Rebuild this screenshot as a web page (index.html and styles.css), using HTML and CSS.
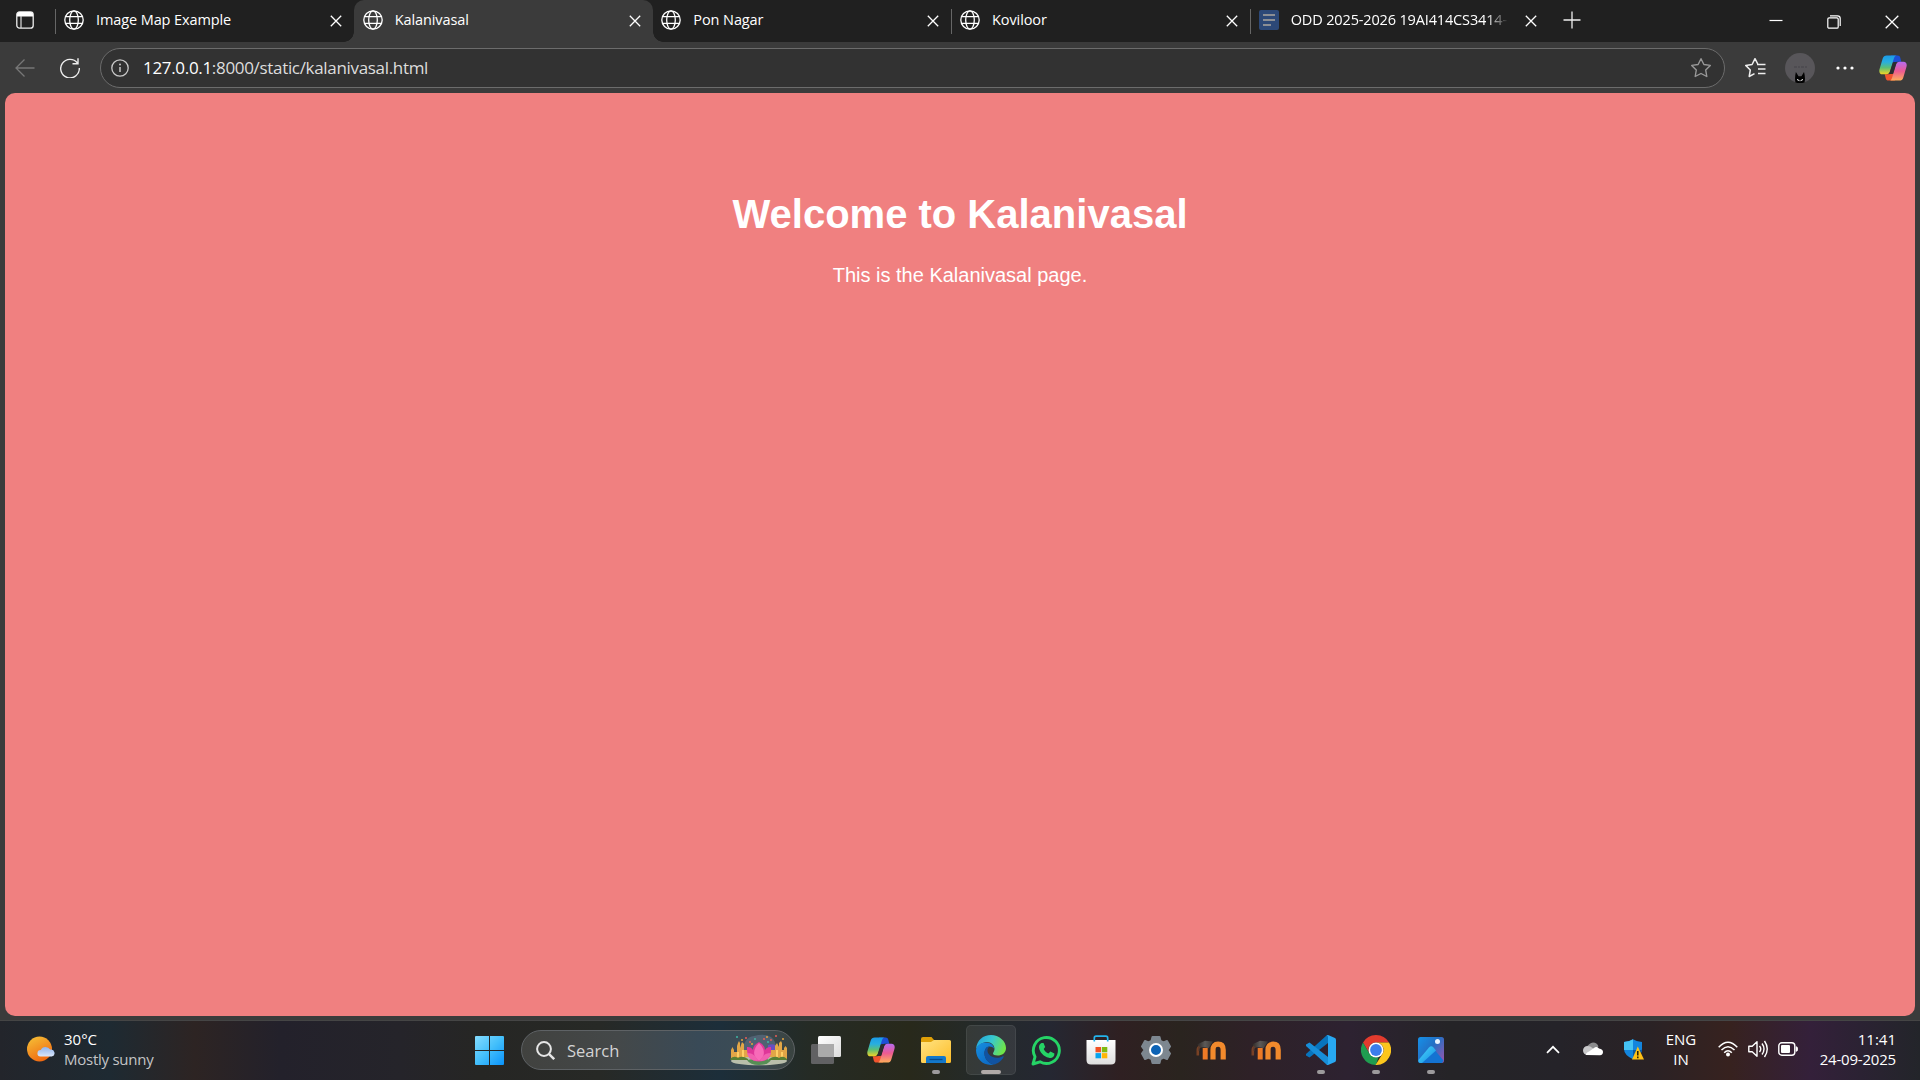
FILE: index.html
```
<!DOCTYPE html>
<html lang="en">
<head>
<meta charset="utf-8">
<title>Kalanivasal</title>
<link rel="stylesheet" href="styles.css">
</head>
<body>
<svg class="defs" aria-hidden="true">
  <defs>
    <linearGradient id="cpA" x1="0" y1="0" x2="0" y2="1"><stop offset="0" stop-color="#1b9be8"/><stop offset=".35" stop-color="#28aee0"/><stop offset=".65" stop-color="#5cbf75"/><stop offset="1" stop-color="#f2d324"/></linearGradient>
    <linearGradient id="cpB" x1="0" y1="0" x2="0" y2="1"><stop offset="0" stop-color="#b66bf0"/><stop offset=".5" stop-color="#ec5a92"/><stop offset="1" stop-color="#ffae5a"/></linearGradient>
    <linearGradient id="md" x1="0" y1="0" x2="1" y2="0"><stop offset="0" stop-color="#2b2523"/><stop offset=".5" stop-color="#5d5a58"/><stop offset="1" stop-color="#3b3634"/></linearGradient>
    <symbol id="globe" viewBox="0 0 20 20"><g fill="none" stroke="currentColor" stroke-width="1.3"><circle cx="10" cy="10" r="9.2"/><ellipse cx="10" cy="10" rx="4.3" ry="9.2"/><path d="M1.6 6.7h16.8M1.6 13.3h16.8"/></g></symbol>
    <symbol id="close" viewBox="0 0 12 12"><path d="M.8.8l10.400 10.400M11.200.8L.8 11.200" fill="none" stroke="currentColor" stroke-width="1.3"/></symbol>
    <symbol id="copilot" viewBox="0 0 28 26">
      <path d="M12 .4h6.600c1.500 0 2.300.9 2.700 2.300l1 4h-4.300c-2 0-3 1-3.600 3z" fill="#1c4fd6"/>
      <path d="M16 25.600H9.400c-1.500 0-2.300-.9-2.700-2.300l-1-4h4.300c2 0 3-1 3.600-3z" fill="#f0542e"/>
      <path d="M7.800.4h10c-1.500.2-2.300 1.100-2.800 2.700L11 16.300c-.7 2-1.700 3-3.700 3H3.500C.8 19.300-.2 17 .5 14.300L3.700 3.600C4.300 1.500 5.600.4 7.800.4z" fill="url(#cpA)"/>
      <path d="M20.200 25.600h-10c1.500-.2 2.300-1.100 2.800-2.700L17 9.700c.7-2 1.700-3 3.700-3h3.800c2.700 0 3.700 2.300 3 5l-3.200 10.700c-.6 2.100-1.900 3.200-4.100 3.200z" fill="url(#cpB)"/>
      <path d="M14.300 7h3.400l-3.900 12h-3.600z" fill="#2b2d30"/>
    </symbol>
    <symbol id="moodle" viewBox="0 0 30 20">
      <path d="M1.800 15.500V10q0-3 2.500-3.600" fill="none" stroke="#9a4f26" stroke-width="2.600" opacity=".7"/>
      <path d="M9.200 19.500V8" fill="none" stroke="#ee7a26" stroke-width="5"/>
      <path d="M17 19.500v-9.500q0-5.800 5.100-5.800t5.100 5.800v9.500" fill="none" stroke="#f28a2c" stroke-width="5.200"/>
      <path d="M1 4.500L9 .8l8 .7-4.500 6.800Q8 6.500 4.500 7.500z" fill="url(#md)"/><path d="M3 5v6" stroke="#4b3931"/>
    </symbol>
  </defs>
</svg>

<header class="tabstrip">
  <div class="workspace"><svg width="18" height="18" viewBox="0 0 18 18"><rect x=".8" y=".8" width="16.400" height="16.400" rx="2.800" fill="none" stroke="#eee" stroke-width="1.300"/><path d="M1 3.500Q1 1 3.500 1h11Q17 1 17 3.500V5.400H1z" fill="#fff"/><path d="M5 5v12" stroke="#ddd" stroke-width="1.200"/></svg></div>
  <div class="tab"><svg class="fav"><use href="#globe"/></svg><span class="title">Image Map Example</span><svg class="x"><use href="#close"/></svg></div>
  <div class="tab active"><svg class="fav"><use href="#globe"/></svg><span class="title">Kalanivasal</span><svg class="x"><use href="#close"/></svg></div>
  <div class="tab quiet"><svg class="fav"><use href="#globe"/></svg><span class="title">Pon Nagar</span><svg class="x"><use href="#close"/></svg></div>
  <div class="tab"><svg class="fav"><use href="#globe"/></svg><span class="title">Koviloor</span><svg class="x"><use href="#close"/></svg></div>
  <div class="tab"><svg class="fav" viewBox="0 0 20 20"><rect width="20" height="20" rx="2" fill="#2c4877"/><path d="M4 5h12M4 10h12M4 15h8" stroke="#8b8e94" stroke-width="2"/></svg><span class="title fade">ODD 2025-2026 19AI414CS3414-F</span><svg class="x"><use href="#close"/></svg></div>
  <div class="newtab"><svg width="18" height="18" viewBox="0 0 18 18"><path d="M9 .5v17M.5 9h17" stroke="#eee" stroke-width="1.300"/></svg></div>
  <div class="wincontrols">
    <svg viewBox="0 0 14 14"><path d="M.5 5.500h13" stroke="#fff" stroke-width="1.200"/></svg>
    <svg viewBox="0 0 14 14"><g fill="none" stroke="#fff" stroke-width="1.200"><rect x=".8" y="2.800" width="10.400" height="10.400" rx="1.300"/><path d="M3 .8h7.500q2.700 0 2.700 2.700V11"/></g></svg>
    <svg viewBox="0 0 14 14"><path d="M.7.7l12.600 12.600M13.300.7L.7 13.300" stroke="#fff" stroke-width="1.300"/></svg>
  </div>
</header>

<nav class="toolbar">
  <svg class="back" viewBox="0 0 20 20"><path d="M19.500 10H1M9.500 1.500L1 10l8.500 8.500" fill="none" stroke="#777" stroke-width="1.300"/></svg>
  <svg class="reload" viewBox="0 0 20 20"><path d="M17.500 5.100A9.300 9.300 0 1 0 19.300 10M18 .3v5.500h-5.500" fill="none" stroke="#eee" stroke-width="1.400"/></svg>
  <div class="address">
    <svg class="info" viewBox="0 0 18 18"><circle cx="9" cy="9" r="8.200" fill="none" stroke="#c9c9c9" stroke-width="1.300"/><path d="M9 8v5" stroke="#c9c9c9" stroke-width="1.500"/><circle cx="9" cy="5.500" r="1" fill="#c9c9c9"/></svg>
    <span class="url"><b>127.0.0.1</b>:8000/static/kalanivasal.html</span>
    <svg class="star" viewBox="0 0 22 22"><path d="M11 1.700l2.900 5.800 6.400.9-4.600 4.600 1.100 6.500L11 16.500l-5.800 3 1.100-6.500L1.700 8.400l6.400-.9z" fill="none" stroke="#999" stroke-width="1.400" stroke-linejoin="round"/></svg>
  </div>
  <svg class="favorites" viewBox="0 0 22 22"><path d="M14 7.500L11 1.700 8.100 7.500l-6.400.9 4.600 4.600-1.100 6.500 5.300-2.800M13 7.500h8.500M14 12h7.500M14 16.500h7.500" fill="none" stroke="#eee" stroke-width="1.500" stroke-linejoin="round"/></svg>
  <svg class="avatar" viewBox="0 0 30 30"><circle cx="15" cy="15" r="15" fill="#58565a"/><path d="M9 14h13" stroke="#454348" stroke-width="1.200" stroke-dasharray="3 1 2 1"/><path d="M10.500 29.500c-.8-3-.5-7 .4-10.500l2.600 4.200h3L19 19c1 3.500 1.300 7.500.5 10.500Q15 30.500 10.500 29.500z" fill="#020202"/><path d="M12 26.500l2.500 1.200M18 26.500l-2.500 1.200" stroke="#fff"/></svg>
  <svg class="more" viewBox="0 0 18 4"><g fill="#fff"><circle cx="2" cy="2" r="1.600"/><circle cx="9" cy="2" r="1.600"/><circle cx="16" cy="2" r="1.600"/></g></svg>
  <svg class="cp"><use href="#copilot"/></svg>
</nav>

<div class="frame">
  <main class="page">
    <h1>Welcome to Kalanivasal</h1>
    <p>This is the Kalanivasal page.</p>
  </main>
</div>

<footer class="taskbar">
  <div class="weather">
    <svg width="28" height="26" viewBox="0 0 28 26"><defs><linearGradient id="sun" x1=".2" y1="0" x2=".7" y2="1"><stop offset="0" stop-color="#f5bd35"/><stop offset="1" stop-color="#f0640f"/></linearGradient><linearGradient id="cl" x1="0" y1="0" x2="0" y2="1"><stop offset="0" stop-color="#8fb4ef"/><stop offset="1" stop-color="#dbe6fa"/></linearGradient></defs><circle cx="12.500" cy="13" r="12.500" fill="url(#sun)"/><path d="M13.500 20.500a3.200 3.200 0 0 1 .3-6.400 5.200 5.200 0 0 1 9.300-.5 3.500 3.500 0 0 1 1.700 6.900z" fill="url(#cl)"/></svg>
    <div class="wtext"><div>30°C</div><div class="cond">Mostly sunny</div></div>
  </div>

  <div class="apps">
    <div class="app"><svg width="29" height="29" viewBox="0 0 29 29"><defs><linearGradient id="win" gradientUnits="userSpaceOnUse" x1="0" y1="0" x2="29" y2="29"><stop offset="0" stop-color="#85dcff"/><stop offset=".5" stop-color="#43bffb"/><stop offset="1" stop-color="#0a93fb"/></linearGradient></defs><path d="M1 0h13v14H0V1q0-1 1-1zM15 0h13q1 0 1 1v13H15zM0 15h14v14H1q-1 0-1-1zM15 15h14v13q0 1-1 1H15z" fill="url(#win)"/></svg></div>
    <div class="search">
      <svg width="19" height="19" viewBox="0 0 19 19"><g fill="none" stroke="#e6e6e6" stroke-width="2"><circle cx="8" cy="8" r="6.900"/><path d="M12.800 12.800l5.400 5.400" stroke-width="2.400"/></g></svg>
      <span>Search</span>
      <svg class="lotus" width="58" height="32" viewBox="0 0 58 32">
        <path d="M13 22C12 10 16 3 24 2q10-3 17 1 7 5 5 19z" fill="#56687b" opacity=".8"/><path d="M38 11q6-2 8 1v9h-8z" fill="#674fc0"/>
        <path d="M1 26V16l1.500-3L4 16v2h3v-6l1-3 1-2 1 2v5l2-6 2 2v6h8v12zM57 26V14l-1.500-2-1.500 2v2h-2V9l-1-2-2 2v4l-2-4-2 3v4h-8v10z" fill="#e2a647"/><path d="M8 18v5M13 16v7M47 16v7M52 18v5" stroke="#ffcf65" stroke-width="2"/>
        <ellipse cx="29" cy="27" rx="28" ry="4.300" fill="#b9beab"/><path d="M0 25q4-4 8-1 4-3 10 1v1H1zM57 25q-4-4-8-1-4-3-10 1v1h18z" fill="#598034"/>
        <path d="M17 26q12-3 24 0-3 5-12 5t-12-5z" fill="#568e55"/>
        <path d="M29 27.500C20 27.500 16.500 21 17 13q4-.5 6 3 0-5 6-8 6 3 6 8 2-3.500 6-3 .5 8.500-3 11.500-3 3-9 3z" fill="#df3799"/><path d="M29 27c-6-4-7-11 0-18 7 7 6 14 0 18z" fill="#f76bb8"/><path d="M28 27c-6 0-10-3-11-8 6 0 9 3 11 8zM30 27c6 0 10-3 11-8-6 0-9 3-11 8z" fill="#f160af"/>
        <g fill="#e65d58"><circle cx="16" cy="4" r="1"/><circle cx="20" cy="8" r="1"/><circle cx="34" cy="5" r="1"/><circle cx="46" cy="2" r="1"/><circle cx="41" cy="6" r="1"/></g><g fill="#41b6a5"><circle cx="7" cy="3" r="1"/><circle cx="25" cy="5" r="1"/><circle cx="38" cy="8" r="1"/></g><g fill="#e6a33c"><circle cx="12" cy="6" r="1"/><circle cx="22" cy="10" r="1"/><circle cx="37" cy="3" r="1"/><circle cx="53" cy="5" r="1"/></g>
      </svg>
    </div>
    <div class="app"><svg width="30" height="28" viewBox="0 0 30 28"><defs><linearGradient id="tv" x2="1" y2="1"><stop offset="0" stop-color="#fff"/><stop offset="1" stop-color="#dcdcdc"/></linearGradient></defs><rect x="7" width="23" height="21" rx="1.500" fill="url(#tv)"/><rect y="8" width="23" height="20" rx="1.500" fill="#616163"/><path d="M7 8h16v13H8.500Q7 21 7 19.500z" fill="#aaa"/></svg></div>
    <div class="app"><svg width="28" height="26"><use href="#copilot"/></svg></div>
    <div class="app open"><svg width="30" height="28" viewBox="0 0 30 28"><defs><linearGradient id="fold" x2="1" y2="1"><stop offset="0" stop-color="#ffe383"/><stop offset="1" stop-color="#fdbd28"/></linearGradient></defs><path d="M0 3q0-2 2-2h8.500l2.500 3v6H0z" fill="#dfa008"/><path d="M10 6l3-2h15.500Q30 4 30 5.500V25.500Q30 27 28.500 27H1.500Q0 27 0 25.500V6z" fill="url(#fold)"/><path d="M5 27v-5q0-2 2-2h16q2 0 2 2v5z" fill="#1378cb"/><path d="M8.500 23.500h13" stroke="#074a8d" stroke-width="1.300"/></svg></div>
    <div class="app open current"><svg width="30" height="30" viewBox="0 0 30 30"><defs><linearGradient id="eg" x1="0" y1=".2" x2="1" y2=".5"><stop offset="0" stop-color="#22a4dc"/><stop offset=".5" stop-color="#38c8cf"/><stop offset="1" stop-color="#70e546"/></linearGradient><linearGradient id="eb" x2=".7" y2="1"><stop offset="0" stop-color="#168fe0"/><stop offset="1" stop-color="#0d6ac5"/></linearGradient></defs><path d="M0 14C1 5 7 0 15 0s15 6 15 13c0 5-4 7.500-8.500 7.500-3 0-4.500-1-4.500-2 0-1 1.500-2 1.500-4.500C18.500 9 13 6 8 7.500 4 9 1.500 11 0 14z" fill="url(#eg)"/><path d="M0 15C1 10 5 7.500 10 7.500c4.500 0 8 2.800 8 6-1-1.200-2.500-2-4.500-2-3.500 0-5 3.500-5 7 0 5.500 4.500 10 9.500 11.100C8 31.500 0 24.500 0 15z" fill="url(#eb)"/><path d="M8.400 18.500c0-3.500 1.600-7 5.100-7-2.500 2-2.500 5-.8 7.500 3 4 9 5 14 2.300.8-.4 1.300 0 .9.800C25.500 26 21.500 29 18 29.600 13 28.500 8.400 24 8.400 18.500z" fill="#1153a1"/></svg></div>
    <div class="app"><svg width="31" height="31" viewBox="0 0 31 31"><path d="M2 29l2-7.200a13 13 0 1 1 5 5z" fill="none" stroke="#25d366" stroke-width="2.900" stroke-linejoin="round"/><path d="M10.500 8h2l1.700 4-1.500 2c1 2 2.700 3.500 4.700 4.500l2-2 4 2c.2 3.500-2.500 5-5.500 4.300C12.500 21.500 8.500 17 8 12.500 7.800 10.500 9 8.500 10.500 8z" fill="#25d366"/></svg></div>
    <div class="app"><svg width="30" height="30" viewBox="0 0 30 30"><defs><linearGradient id="st" x2="0" y2="1"><stop offset="0" stop-color="#fff"/><stop offset="1" stop-color="#dedede"/></linearGradient></defs><path d="M.5 5h29v20q0 4.500-4.500 4.500H5Q.5 29.500.5 25z" fill="url(#st)"/><path d="M8.300 6.500V3q0-1.800 1.800-1.800h9.800q1.800 0 1.800 1.800v3.500" fill="none" stroke="#23b4ec" stroke-width="1.700"/><path d="M9.500 12H15v5.300H9.500z" fill="#f15124"/><path d="M15.800 12h5.500v5.300h-5.500z" fill="#7fba10"/><path d="M9.500 18.100H15v5.200H9.500z" fill="#06a3ee"/><path d="M15.800 18.100h5.500v5.200h-5.500z" fill="#ffb605"/></svg></div>
    <div class="app"><svg width="30" height="30" viewBox="0 0 30 30"><path d="M11.500 2h7l1 4 3 1.500L26 6l3 5.500-2.500 3.500 2.500 3.500-3 5.500-3.500-1.500-3 1.500-1 4h-7l-1-4-3-1.500L4 24 1 18.500 3.500 15 1 11.500 4 6l3.500 1.500 3-1.500z" fill="#7d8790" stroke="#7d8790" stroke-width="2" stroke-linejoin="round"/><circle cx="15" cy="15" r="6" fill="#0d63b5" stroke="#fff" stroke-width="2"/></svg></div>
    <div class="app"><svg width="30" height="20"><use href="#moodle"/></svg></div>
    <div class="app"><svg width="30" height="20"><use href="#moodle"/></svg></div>
    <div class="app open"><svg width="30" height="30" viewBox="0 0 30 30"><path d="M22 0v8L3.500 22.500 0 20.500V19L20.500.5z" fill="#0874bd"/><path d="M22 30v-8L3.500 7.500 0 9.500V11l20.500 18.500z" fill="#178ed9"/><path d="M22 0l7 3q1 .5 1 2v20q0 1.500-1 2l-7 3q-1 0-1.800-.8Q22 29.500 22 28V2Q22 .5 20.500.5 21.500 0 22 0z" fill="#28a8f2"/></svg></div>
    <div class="app open"><svg width="30" height="30" viewBox="0 0 30 30"><path d="M15 0a15 15 0 0 1 13 7.500H15a7.500 7.500 0 0 0-6.500 11.300L2 7.500A15 15 0 0 1 15 0z" fill="#e33b2e"/><path d="M2 7.500l6.500 11.300a7.500 7.500 0 0 0 9 3.300L15 30A15 15 0 0 1 2 7.500z" fill="#1f9d50"/><path d="M28 7.500A15 15 0 0 1 14.500 30l7-11.200A7.500 7.500 0 0 0 15 7.500z" fill="#fcc61d"/><circle cx="15" cy="15" r="7.500" fill="#fff"/><circle cx="15" cy="15" r="5.900" fill="#3b7ded"/></svg></div>
    <div class="app open"><svg width="26" height="26" viewBox="0 0 26 26"><defs><linearGradient id="ph" x2="1" y2=".8"><stop offset="0" stop-color="#1691e8"/><stop offset=".5" stop-color="#2370c5"/><stop offset="1" stop-color="#8b58af"/></linearGradient><linearGradient id="ph2" x2="1" y2="1"><stop offset="0" stop-color="#49d8fa"/><stop offset="1" stop-color="#158ce5"/></linearGradient></defs><rect width="26" height="26" rx="2.500" fill="url(#ph)"/><path d="M1 24.500L12 11q1.500-1.500 3 0L25.500 23.500 24 26H2z" fill="#1473d2"/><path d="M.5 23L11 10.500q2.200-2.500 4.500 0l2.500 3L4 26H2.500Q0 26 .5 23z" fill="url(#ph2)"/><circle cx="19.500" cy="4.500" r="2.500" fill="#e9f4ff"/></svg></div>
  </div>

  <div class="tray">
    <svg class="chev" viewBox="0 0 14 9"><path d="M1 7.800l6-6 6 6" fill="none" stroke="#fff" stroke-width="1.700"/></svg>
    <svg class="cloud" viewBox="0 0 20 14"><path d="M5 11a10 10 0 0 1-1-6Q6 1 10 .4q4 0 5.500 4z" fill="#8c8c8e"/><path d="M4.500 13A4.400 4.400 0 0 1 4.500 4q3 0 5 2l6 5-4 2z" fill="#c8c8ca"/><path d="M3 13q-.5-2 3-3.500l5-3.500q2.500-2 5 .5 4 .5 4 3.500t-3 3.300z" fill="#fff"/></svg>
    <svg class="shield" viewBox="0 0 20 21"><path d="M9 .3Q13 3 18 3v7q0 6-9 10.200Q0 16 0 10V3q5 0 9-2.700z" fill="#1385dd"/><path d="M9 .3V11H0V3q5 0 9-2.700z" fill="#45c3f3"/><path d="M9 11h9q0 5-9 9.200z" fill="#075aa9"/><path d="M13.800 7.500L20 20.500H8z" fill="#ffc116"/><path d="M13.800 12v4.500M13.800 17.500v1.700" stroke="#251e08" stroke-width="1.500"/></svg>
    <div class="lang"><div>ENG</div><div>IN</div></div>
    <svg class="wifi" viewBox="0 0 20 16"><g fill="none" stroke="#fff" stroke-width="1.500"><path d="M.7 6.200Q10-3.600 19.300 6.200"/><path d="M3.500 9Q10 2.300 16.500 9"/><path d="M6.200 11.800Q10 7.800 13.800 11.800"/></g><circle cx="10" cy="13.500" r="2" fill="#fff"/></svg>
    <svg class="vol" viewBox="0 0 20 18"><g fill="none" stroke="#fff" stroke-width="1.400"><path d="M.8 6.200h3.400L9 1.700v14.600l-4.800-4.500H.8z" stroke-linejoin="round"/><path d="M11.500 6q2.500 3 0 6M14 3.500q4 5.500 0 11M16.500 1q5.500 8 0 16"/></g></svg>
    <svg class="bat" viewBox="0 0 20 14"><rect x=".8" y=".8" width="16" height="12.400" rx="3" fill="none" stroke="#fff" stroke-width="1.400"/><rect x="3" y="3" width="9" height="8" rx="1" fill="#fff"/><path d="M18 4.500q2 .5 2 2.500t-2 2.500z" fill="#fff" stroke="#fff" stroke-width=".5"/></svg>
    <div class="clock"><div class="time">11:41</div><div>24-09-2025</div></div>
  </div>
</footer>
</body>
</html>
```
FILE: styles.css
```
* { box-sizing: border-box; }
html, body { height: 100%; }
body {
  margin: 0;
  display: flex;
  flex-direction: column;
  overflow: hidden;
  background: #3b3b3b;
  color: #fff;
  font-family: "Open Sans", "Noto Sans", sans-serif;
}
svg { display: block; flex: none; }
.defs { width: 0; height: 0; position: absolute; }

.tabstrip { display: flex; height: 42px; background: #202020; flex: none; }
.workspace { width: 55.400px; padding: 11px 0 0 16px; flex: none; }
.tab {
  width: 298.700px;
  flex: none;
  display: flex;
  align-items: center;
  padding: 0 11px 2px 8.600px;
  background: linear-gradient(#666, #666) 0 9px / 1px 25px no-repeat;
  font-size: 14.500px;
  letter-spacing: -.1px;
}
.tab.active { background: #3b3b3b; border-radius: 10px 10px 0 0; position: relative; }
.tab.active::before, .tab.active::after {
  content: "";
  position: absolute;
  bottom: 0;
  width: 10px;
  height: 10px;
  background: radial-gradient(circle at 0 0, transparent 9.500px, #3b3b3b 10px);
}
.tab.active::before { left: -10px; }
.tab.active::after { right: -10px; background: radial-gradient(circle at 100% 0, transparent 9.500px, #3b3b3b 10px); }
.tab.quiet { background: none; }
.fav { width: 20px; height: 20px; }
.title { flex: 1; margin-left: 12px; margin-right: 20px; white-space: nowrap; line-height: 22px; }
.fade { margin-right: 12px; min-width: 0; letter-spacing: -.15px; -webkit-mask-image: linear-gradient(90deg, #000 88%, transparent 98%); mask-image: linear-gradient(90deg, #000 88%, transparent 98%); }
.x { width: 12px; height: 12px; margin: 1px 1px 0 0; }
.newtab { padding: 11px 0 0 14px; }
.wincontrols { margin-left: auto; display: flex; gap: 44px; padding: 15px 21.500px 0 0; }
.wincontrols svg { width: 14px; height: 14px; }

.toolbar { height: 51px; flex: none; display: flex; align-items: center; padding: 1px 13px 0 15px; }
.back { width: 20px; height: 20px; }
.reload { width: 20px; height: 20px; margin-left: 25px; }
.address {
  width: 1625px;
  height: 40px;
  margin-left: 20px;
  padding: 0 12px 0 10px;
  display: flex;
  align-items: center;
  border: 1px solid #6c6c6c;
  border-radius: 20px;
  background: #323232;
}
.info { width: 18px; height: 18px; }
.url { flex: 1; margin-left: 14px; font-size: 17px; letter-spacing: -.32px; line-height: 24px; color: #ddd; }
.url b { font-weight: 400; color: #fff; }
.star { width: 22px; height: 22px; }
.favorites { width: 22px; height: 22px; margin-left: 19px; }
.avatar { width: 30px; height: 30px; margin-left: 19px; }
.more { width: 18px; height: 4px; margin-left: 21px; }
.cp { width: 28px; height: 26px; margin-left: auto; }

.frame { flex: 1; min-height: 0; padding: 0 5px 4.500px; display: flex; }
.page {
  flex: 1;
  border-radius: 10px;
  background: #f08080;
  text-align: center;
  font-family: "Liberation Sans", Arial, sans-serif;
  padding-top: 98px;
}
.page h1 { margin: 0; font-size: 40px; line-height: 46px; }
.page p { margin: 27px 0 0; font-size: 20px; line-height: 23px; }

.taskbar {
  height: 60px;
  flex: none;
  display: grid;
  grid-template-columns: 464px auto 1fr;
  border-top: 1px solid #454545;
  font-size: 15px;
  background: linear-gradient(90deg, #23252b 0, #1e2a32 110px, #2d2423 195px, #23212b 280px, #25242a 400px, #262624 480px, #272926 600px, #1c2e3a 720px, #252b25 810px, #28291b 910px, #242a2a 980px, #252732 1050px, #2f2022 1120px, #2a241f 1180px, #2e2127 1250px, #2d2231 1350px, #252427 1450px, #252329 1560px, #2a2225 1650px, #37221f 1730px, #34203a 1810px, #2b2233 1860px, #23252a 100%);
}
.weather { display: flex; align-items: center; padding: 0 0 3px 27px; gap: 9px; line-height: 20px; }
.cond { color: #c4c4c6; letter-spacing: -.25px; }
.apps { display: flex; align-items: center; gap: 5px; padding-bottom: 1px; }
.app { width: 50px; height: 50px; display: flex; align-items: center; justify-content: center; border-radius: 5px; position: relative; }
.app.open::after { content: ""; position: absolute; bottom: 1px; width: 8px; height: 4px; border-radius: 2px; background: #9c9a9c; }
.app.current { background: #ffffff14; border: 1px solid #ffffff12; }
.app.current::after { width: 20px; bottom: 0; background: #b0aaa8; }
.search {
  width: 274px;
  height: 40px;
  margin: 0 1px 0 2px;
  padding: 0 6px 0 14px;
  display: flex;
  align-items: center;
  gap: 12px;
  border: 1px solid #5e6265;
  border-radius: 20px;
  background: linear-gradient(90deg, #41423f, #444849 35%, #394a57 65%, #3c4c55 85%, #3a4340);
  font-size: 16.500px;
  color: #d4d4d4;
}
.lotus { margin-left: auto; }
.tray { display: flex; align-items: center; padding: 0 24px 3px 0; justify-content: flex-end; line-height: 20px; }
.chev { width: 14px; height: 9px; margin-right: 23px; }
.cloud { width: 20px; height: 14px; margin-right: 21px; }
.shield { width: 20px; height: 21px; margin-right: 21px; }
.lang { width: 32px; text-align: center; margin-right: 21px; }
.wifi { width: 20px; height: 16px; margin-right: 10px; }
.vol { width: 20px; height: 18px; margin-right: 10px; }
.bat { width: 20px; height: 14px; margin-right: 20px; }
.clock { width: 78px; text-align: right; white-space: nowrap; letter-spacing: -.2px; }
.clock .time { letter-spacing: 0; }
```
